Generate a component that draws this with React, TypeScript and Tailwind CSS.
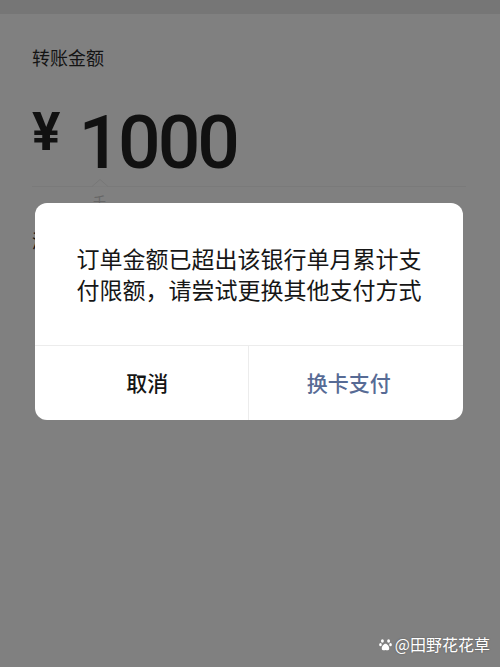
const CJK = '"Noto Sans CJK SC", "Noto Sans", sans-serif';

function Paw() {
  return (
    <svg width="13" height="13" viewBox="0 0 16 16" fill="white" aria-hidden="true">
      <ellipse cx="4.2" cy="3.6" rx="1.8" ry="2.2" />
      <ellipse cx="11.8" cy="3.6" rx="1.8" ry="2.2" />
      <ellipse cx="1.8" cy="8.2" rx="1.6" ry="2" />
      <ellipse cx="14.2" cy="8.2" rx="1.6" ry="2" />
      <path d="M8 7.2c-2.2 0-4.6 3.4-4.6 5.6 0 1.7 1.3 2.4 2.6 2.4 0.9 0 1.3-0.4 2-0.4s1.1 0.4 2 0.4c1.3 0 2.6-0.7 2.6-2.4 0-2.2-2.4-5.6-4.6-5.6z" />
    </svg>
  );
}

export default function App() {
  return (
    <div
      className="relative w-[500px] h-[667px] overflow-hidden bg-[#808080]"
      style={{ fontFamily: CJK }}
    >
      <div className="h-[14px] bg-[#767676]" />

      {/* transfer card under the overlay */}
      <div className="rounded-t-[10px] bg-[#808080] px-[32px] pt-[30px]">
        <div className="text-[18px] leading-[26px] text-[#141414]">转账金额</div>

        <div className="mt-[38px] flex items-start h-[78px]">
          <span
            className="mt-[-2px] text-[53px] font-bold leading-none text-[#111]"
            style={{ fontFamily: 'Roboto, sans-serif' }}
          >
            ¥
          </span>
          <span
            className="ml-[18px] mt-[-3px] text-[75px] font-medium leading-none tracking-[-3px] text-[#111]"
            style={{ fontFamily: 'Roboto, sans-serif' }}
          >
            1000
          </span>
        </div>

        <div className="relative mr-[2px] h-px bg-[#7a7a7a]">
          <svg
            className="absolute left-[60px] top-[-7px]"
            width="16"
            height="8"
            viewBox="0 0 16 8"
            aria-hidden="true"
          >
            <polyline points="0,7.5 8,0.5 16,7.5" fill="#808080" stroke="#777" strokeWidth="1" />
          </svg>
        </div>
        <div className="ml-[61px] mt-[6px] text-[13px] leading-[16px] text-[#666]">千</div>
        <div className="mt-[18px] text-[18px] leading-[26px] text-[#141414]">添</div>
      </div>

      {/* alert dialog */}
      <div className="absolute left-[35px] top-[203px] w-[428px] h-[217px] flex flex-col rounded-[12px] bg-white">
        <div className="h-[142px] flex items-center justify-center text-center text-[23px] leading-[31px] text-[#161616]">
          <p>
            订单金额已超出该银行单月累计支
            <br />
            付限额，请尝试更换其他支付方式
          </p>
        </div>
        <div className="flex flex-1 border-t border-[#ececec]">
          <div className="flex flex-1 items-center justify-center pl-[12px] text-[21px] font-medium text-[#151515]">
            取消
          </div>
          <div className="w-px bg-[#ececec]" />
          <div className="flex flex-1 items-center justify-center pr-[14px] text-[21px] font-medium text-[#576b95]">
            换卡支付
          </div>
        </div>
      </div>

      {/* watermark */}
      <div
        className="absolute right-[10px] top-[634px] flex items-center gap-[3px] text-[16px] leading-[20px] text-white"
        style={{ textShadow: '0 0 2px rgba(0,0,0,0.35)' }}
      >
        <Paw />
        <span>@田野花花草</span>
      </div>
    </div>
  );
}
